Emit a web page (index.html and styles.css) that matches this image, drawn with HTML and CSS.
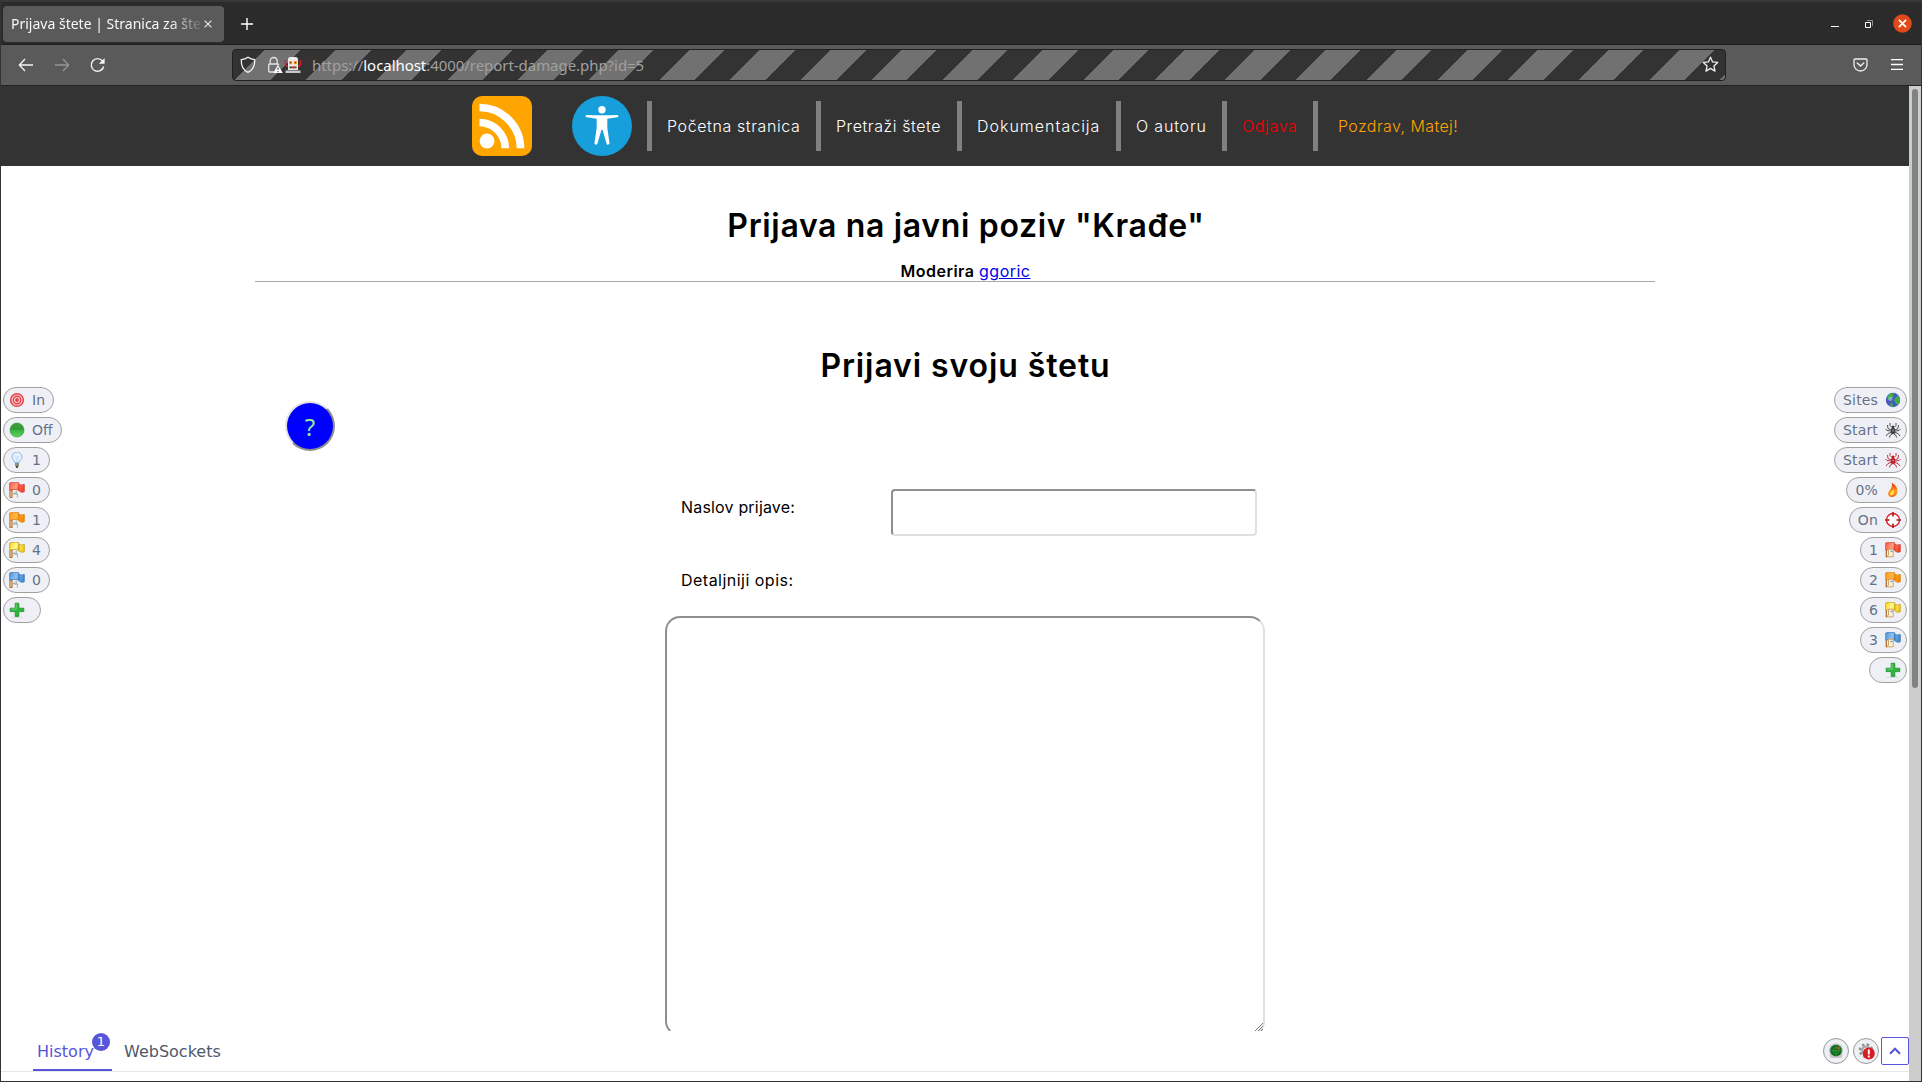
FILE: index.html
```html
<!DOCTYPE html>
<html lang="hr">
<head>
<meta charset="utf-8">
<title>Prijava štete | Stranica za štete</title>
<link rel="stylesheet" href="styles.css">
</head>
<body>
<svg class="defs" width="0" height="0">
  <defs>
    <linearGradient id="g-red" x2="1" y2=".3"><stop offset="0" stop-color="#ff5a48"/><stop offset=".5" stop-color="#ff9a80"/><stop offset="1" stop-color="#f4452f"/></linearGradient>
    <linearGradient id="g-orange" x2="1" y2=".3"><stop offset="0" stop-color="#ff9a10"/><stop offset=".5" stop-color="#ffb347"/><stop offset="1" stop-color="#f98a00"/></linearGradient>
    <linearGradient id="g-yellow" x2="1" y2=".3"><stop offset="0" stop-color="#ffd800"/><stop offset=".5" stop-color="#fff59a"/><stop offset="1" stop-color="#f5cf20"/></linearGradient>
    <linearGradient id="g-blue" x2="1" y2=".3"><stop offset="0" stop-color="#4c93dc"/><stop offset=".5" stop-color="#8cc0f2"/><stop offset="1" stop-color="#4a8ed6"/></linearGradient>
    <linearGradient id="g-ball" x2="0" y2="1"><stop offset="0" stop-color="#3da53f"/><stop offset=".5" stop-color="#2f9a34"/><stop offset=".5" stop-color="#38b440"/><stop offset="1" stop-color="#5fd45c"/></linearGradient>
    <linearGradient id="g-fire" x2="0" y2="1"><stop offset="0" stop-color="#e5340c"/><stop offset=".6" stop-color="#ff9d1c"/><stop offset="1" stop-color="#f26a10"/></linearGradient>
    <symbol id="wave" viewBox="0 0 16 16"><path d="M.7 1C4-.1 7 0 9.800.8v7.400C7 7.200 4 7.400.7 8.200zM9.800 2.300c1.700.9 3.600.7 5.500.2v7.200c-2 .9-3.900.7-5.500-1.100z" stroke-width=".8"/></symbol>
    <symbol id="pole" viewBox="0 0 16 16"><path d="M.9 8.300h2.200v7.200H.9z" fill="#f0cc9c" stroke="#a4622a" stroke-width=".9"/><path d="M4.500 11.500l3.200-2.300v3zM4.500 12h3.800v3.600" fill="#fff" stroke="#7d9a90" stroke-width=".7"/></symbol>
    <symbol id="page" viewBox="0 0 16 16"><path d="M3.500 7.200H8.200v7.600H1.500l2-1.500z" fill="#fff3dc" stroke="#d09a58" stroke-width=".9"/><path d="M5.500 9.500h2" stroke="#3aa0e8" stroke-width="1.300"/><path d="M1.300 8.300v7" stroke="#a4622a" stroke-width="1.200"/></symbol>
    <symbol id="plus" viewBox="0 0 16 16"><path d="M2 15.300h11" stroke="#d5d7da"/><path d="M6.200 1.200h3.600v5h5v3.400h-5v4.800H6.200V9.600h-5V6.200h5z" fill="#2fb43c" stroke="#169428" stroke-width=".8"/><path d="M7.200 2.200v5H2.300" fill="none" stroke="#7be27f" stroke-width=".8"/></symbol>
    <symbol id="spider" viewBox="0 0 16 16"><g fill="none" stroke="currentColor" stroke-width=".9"><path d="M6 8L3 6.500 2.500 3M5.800 9L2 8.500.5 7M6 10.500l-3 1L1 14M7 12l-2 1.500L4.500 15.500M10 8l3-1.500.5-3.500M10.200 9l3.800-.5L15.500 7M10 10.500l3 1 2 2.500M9 12l2 1.500.5 2M6.500 5L5 3.500V1M9.500 5L11 3.500V1"/></g><ellipse cx="8" cy="9" rx="2.300" ry="3.200" fill="currentColor"/><circle cx="8" cy="4.900" r="1.500" fill="currentColor"/><circle cx="8" cy="8.500" r="1" fill="#fff" opacity=".4"/></symbol>
  </defs>
</svg>

<div class="window">
  <header class="tabs">
    <div class="tab"><span class="tab-title">Prijava štete | Stranica za štete</span>
      <svg width="8" height="8" viewBox="0 0 8 8"><path d="M.6.6l6.800 6.800M7.400.6L.6 7.400" stroke="#eee" stroke-width="1.100"/></svg></div>
    <svg class="new-tab" width="12" height="12" viewBox="0 0 12 12"><path d="M6 0v12M0 6h12" stroke="#fff" stroke-width="1.400"/></svg>
    <div class="controls">
      <svg width="8" height="9" viewBox="0 0 8 9"><path d="M0 7.500h8" stroke="#fff"/></svg>
      <svg width="8" height="8" viewBox="0 0 8 8"><path d="M2 .5h5.500V6" fill="none" stroke="#8b8f8c"/><path d="M.5 2.500h5v5h-5z" fill="none" stroke="#fff"/></svg>
      <svg width="19" height="19" viewBox="0 0 19 19"><circle cx="9.500" cy="9.500" r="9.300" fill="#e0491a"/><path d="M5.900 5.900l7.200 7.200M13.100 5.900l-7.200 7.200" stroke="#fff" stroke-width="1.700"/></svg>
    </div>
  </header>

  <div class="toolbar">
    <svg class="back" width="16" height="14" viewBox="0 0 16 14"><path d="M7 1L1.300 7 7 13M1.300 7H15" fill="none" stroke="#f4f4f4" stroke-width="1.300"/></svg>
    <svg class="forward" width="16" height="14" viewBox="0 0 16 14"><path d="M9 1l5.700 6L9 13M14.700 7H1" fill="none" stroke="#959595" stroke-width="1.300"/></svg>
    <svg class="reload" width="16" height="16" viewBox="0 0 16 16"><path d="M13.700 9.500A6.300 6.300 0 1 1 12.500 4" fill="none" stroke="#f4f4f4" stroke-width="1.400"/><path d="M14.600 1v5.800H8.900z" fill="#f4f4f4"/></svg>
    <div class="address">
      <svg width="16" height="18" viewBox="0 0 16 18"><path d="M8 1.300c2 1.400 4 2.200 6.700 2.300.3 6-1.800 10.500-6.700 12.800C3.100 14.100 1 9.600 1.300 3.600 4 3.500 6 2.700 8 1.300z" fill="none" stroke="#f4f4f4" stroke-width="1.300"/></svg>
      <svg class="lock" width="16" height="18" viewBox="0 0 16 18"><path d="M3.200 8V5a3.500 3.500 0 0 1 7 0v3M7 16H2.700a1 1 0 0 1-1-1V9a1 1 0 0 1 1-1h8a1 1 0 0 1 1 1" fill="none" stroke="#e4e4e4" stroke-width="1.300"/><path d="M11 8.800l4.800 8.200H6.200z" fill="#fff"/><path d="M11 11.500v2.600M11 15v1.200" stroke="#555" stroke-width="1.200"/></svg>
      <svg class="robot" width="18" height="17" viewBox="0 0 18 17"><path d="M1.500 4v5l2.500 1.500M16.500 4v5L14 10.500" fill="none" stroke="#d11c35" stroke-width="1.500"/><path d="M4 3.500Q4 1 6.500 1h5Q14 1 14 3.500V14H4z" fill="#eceaea"/><path d="M1.500 14.500h15V17h-15z" fill="#c9c7c7"/><path d="M5 5h3.200v3.200H5zM9.800 5H13v3.200H9.800z" fill="#f0a23c"/><path d="M6 6h1.200v1.200H6zM10.800 6H12v1.200h-1.200z" fill="#7b1d10"/><path d="M5.500 10.500h7v1.800h-7z" fill="#3b3434"/><path d="M7.500 10.500h1.300v1.800H7.500zM10 10.500h1.300v1.800H10z" fill="#e0662b"/></svg>
      <span class="url">https://<b>localhost</b>:4000/report-damage.php?id=5</span>
      <svg class="star" width="17" height="17" viewBox="0 0 17 17"><path d="M8.500 1.200l2.100 4.700 5.100.5-3.800 3.500 1.100 5.200-4.500-2.700L4 15.100l1.100-5.200L1.300 6.400l5.100-.5z" fill="none" stroke="#f0f0f0" stroke-width="1.300" stroke-linejoin="round"/></svg>
    </div>
    <svg class="pocket" width="15" height="14" viewBox="0 0 15 14"><path d="M2 1h11a1 1 0 0 1 1 1v4.500a6.500 6.500 0 0 1-13 0V2a1 1 0 0 1 1-1z" fill="none" stroke="#f0f0f0" stroke-width="1.300"/><path d="M4.200 5l3.300 3.100L10.800 5" fill="none" stroke="#f0f0f0" stroke-width="1.400" stroke-linecap="round"/></svg>
    <svg class="menu" width="12" height="11" viewBox="0 0 12 11"><path d="M0 .7h12M0 5.500h12M0 10.300h12" stroke="#fff" stroke-width="1.300"/></svg>
  </div>

  <div class="viewport">
    <main class="page">
      <nav class="site-nav">
        <svg width="60" height="60" viewBox="0 0 60 60"><rect width="60" height="60" rx="10" fill="#ffa500"/><circle cx="15" cy="45" r="7.400" fill="#fff"/><path d="M7.500 26.500A26 26 0 0 1 33.300 52.300M7.500 11.500A41 41 0 0 1 48.500 52.300" fill="none" stroke="#fff" stroke-width="7.700"/></svg>
        <svg class="access" width="60" height="60" viewBox="0 0 60 60"><circle cx="30" cy="30" r="30" fill="#169fdb"/><circle cx="30" cy="13.700" r="3.700" fill="#fff"/><path d="M15 18.900q15 .8 30 0a1.200 1.200 0 0 1 .3 2.400l-10 1.400V32l2.200 14.800a1.500 1.500 0 0 1-3 .6L30.600 34h-1.200l-3.900 13.400a1.500 1.500 0 0 1-3-.6L24.700 32v-9.300l-10-1.400a1.200 1.200 0 0 1 .3-2.400z" fill="#fff"/></svg>
        <ul>
          <li class="n1">Početna stranica</li><li class="n2">Pretraži štete</li><li class="n3">Dokumentacija</li><li class="n4">O autoru</li><li class="n5">Odjava</li><li class="n6">Pozdrav, Matej!</li>
        </ul>
      </nav>
      <section class="intro">
        <h1>Prijava na javni poziv "Krađe"</h1>
        <p><strong>Moderira</strong> <a href="#">ggoric</a></p>
      </section>
      <section class="report">
        <h2>Prijavi svoju štetu</h2>
        <button class="help" type="button">?</button>
        <form>
          <div class="field"><label class="l1" for="title">Naslov prijave:</label><input id="title" type="text"></div>
          <label class="l2" for="details">Detaljniji opis:</label>
          <div class="area"><textarea id="details"></textarea>
            <svg width="8" height="8" viewBox="0 0 8 8"><path d="M0 8l8-8M3 8l5-5M6 8l2-2" stroke="#777" stroke-width="1"/></svg></div>
        </form>
      </section>
      <footer class="hud-bottom">
        <div class="hud-tab active">History<span class="count">1</span></div>
        <div class="hud-tab ws">WebSockets</div>
        <div class="hud-tools">
          <span class="round"><svg width="16" height="16" viewBox="0 0 16 16"><rect x="1.500" y="10" width="13" height="5" rx="2" fill="#c9c9c9"/><circle cx="8" cy="7.500" r="6.900" fill="#b9bdb9"/><circle cx="8" cy="7.500" r="5.800" fill="#116b1c"/><path d="M8 2v11M2.500 7.500h11" stroke="#3f9a42" stroke-width=".6"/><circle cx="8" cy="7.500" r="3" fill="none" stroke="#3f9a42" stroke-width=".6"/><circle cx="11" cy="5" r="1.100" fill="#ff4330"/></svg></span>
          <span class="round"><svg width="17" height="17" viewBox="0 0 17 17"><circle cx="8" cy="7.500" r="6" fill="none" stroke="#8f8f8f" stroke-width="2.600" stroke-dasharray="2.360 2.352"/><circle cx="8" cy="7.500" r="4" fill="none" stroke="#aaa" stroke-width="2.500"/><circle cx="10.800" cy="10.500" r="6" fill="#d61c24"/><path d="M10.800 6.500v5M10.800 12.600v1.800" stroke="#fff" stroke-width="1.900"/></svg></span>
          <span class="toggle"><svg width="12" height="8" viewBox="0 0 12 8"><path d="M1 6.700L6 1.700l5 5" fill="none" stroke="#5553d8" stroke-width="2"/></svg></span>
        </div>
      </footer>
      <aside class="hud left">
        <div class="pill"><svg viewBox="0 0 16 16"><circle cx="8" cy="8" r="7.100" fill="#e8414a"/><circle cx="8" cy="8" r="5" fill="none" stroke="#fbd5d6" stroke-width="1.100"/><circle cx="8" cy="8" r="2.500" fill="none" stroke="#fbd5d6" stroke-width="1.100"/></svg>In</div>
        <div class="pill"><svg viewBox="0 0 16 16"><circle cx="8" cy="8" r="7" fill="url(#g-ball)" stroke="#2d9134" stroke-width=".6"/></svg>Off</div>
        <div class="pill"><svg viewBox="0 0 16 16"><path d="M5.800 10.500C5.500 8 3 7.500 3 5a5 5 0 0 1 10 0c0 2.500-2.500 3-2.800 5.500z" fill="#e3f1ff" stroke="#8bb8ee"/><path d="M6 4.500l1.500 1 1-1 1.500 1M8 6v4.500" fill="none" stroke="#a5c8f0" stroke-width=".7"/><path d="M6 11h4v3.500H6z" fill="#8c8f80"/><path d="M7 15h2" stroke="#222" stroke-width="1.500"/></svg>1</div>
        <div class="pill"><svg viewBox="0 0 16 16"><use href="#pole"/><use href="#wave" fill="url(#g-red)" stroke="#d8402c"/></svg>0</div>
        <div class="pill"><svg viewBox="0 0 16 16"><use href="#pole"/><use href="#wave" fill="url(#g-orange)" stroke="#d9800c"/></svg>1</div>
        <div class="pill"><svg viewBox="0 0 16 16"><use href="#pole"/><use href="#wave" fill="url(#g-yellow)" stroke="#c79c10"/></svg>4</div>
        <div class="pill"><svg viewBox="0 0 16 16"><use href="#pole"/><use href="#wave" fill="url(#g-blue)" stroke="#3b78b8"/></svg>0</div>
        <div class="pill empty"><svg viewBox="0 0 16 16"><use href="#plus"/></svg></div>
      </aside>
      <aside class="hud right">
        <div class="pill wide">Sites<svg viewBox="0 0 16 16"><circle cx="8" cy="8" r="7.200" fill="#4a55c4"/><path d="M2 4.500C4 1.500 7 .6 9.500 1L8 3l1 1.500-3 1.800L5.500 9 3 7.500zM10 6l3-2.500 2 3-.2 4L12 13l-1.500-2L9 8.500zM5 10.500l2.500 1L8 15H6z" fill="#3fae49"/><circle cx="5.500" cy="6.800" r="2.200" fill="#b8c4f8" opacity=".55"/></svg></div>
        <div class="pill wide">Start<svg class="dark" viewBox="0 0 16 16"><use href="#spider"/></svg></div>
        <div class="pill wide">Start<svg class="red" viewBox="0 0 16 16"><use href="#spider"/></svg></div>
        <div class="pill wide">0%<svg viewBox="0 0 16 16"><path d="M6.500.8c5 2.500 6.700 6 5.700 10-.8 3.500-3.700 4.700-6 4.200-3.200-.8-4-4.200-1.600-6.800 1.600-1.700 3.200-3.700 1.900-7.400z" fill="url(#g-fire)"/><path d="M8.500 7.500c1.300 3.500-.3 6-2.300 5.800-2-.3-1.500-2.300.2-3.300z" fill="#ffe352"/></svg></div>
        <div class="pill wide">On<svg viewBox="0 0 16 16"><circle cx="8" cy="8" r="6.500" fill="#fff" stroke="#d5222c" stroke-width="1.400"/><path d="M8 0v4.500M8 11.500V16M0 8h4.500M11.500 8H16" stroke="#a81820" stroke-width="1.600"/></svg></div>
        <div class="pill">1<svg viewBox="0 0 16 16"><use href="#wave" fill="url(#g-red)" stroke="#d8402c"/><use href="#page"/></svg></div>
        <div class="pill">2<svg viewBox="0 0 16 16"><use href="#wave" fill="url(#g-orange)" stroke="#d9800c"/><use href="#page"/></svg></div>
        <div class="pill">6<svg viewBox="0 0 16 16"><use href="#wave" fill="url(#g-yellow)" stroke="#c79c10"/><use href="#page"/></svg></div>
        <div class="pill">3<svg viewBox="0 0 16 16"><use href="#wave" fill="url(#g-blue)" stroke="#3b78b8"/><use href="#page"/></svg></div>
        <div class="pill empty"><svg viewBox="0 0 16 16"><use href="#plus"/></svg></div>
      </aside>
    </main>
    <div class="scrollbar"><div class="thumb"></div></div>
  </div>
</div>
</body>
</html>
```
FILE: styles.css
```css
* { box-sizing: border-box; }
html, body { margin: 0; height: 100%; overflow: hidden; }
svg { display: block; flex: none; }
.defs { position: absolute; }

.window {
  display: flex; flex-direction: column;
  width: 1922px; height: 1082px;
  border: 1px solid #333; border-top: 2px solid #383838;
  background: #fff;
}

/* Tab strip */
.tabs {
  display: flex; align-items: center; flex: none;
  height: 43px; padding: 1px 9px 0 2px;
  background: #2b2b2b; border-bottom: 1px solid #1e1e1e;
  font-family: "Noto Sans", sans-serif;
}
.tab {
  display: flex; align-items: center;
  width: 221px; height: 36px; padding-left: 8px;
  border-radius: 4px; background: #5a5a5a; color: #f7f7f7;
  font-size: 14px;
}
.tab-title {
  width: 190px; margin-right: 3px; overflow: hidden; white-space: nowrap;
  -webkit-mask-image: linear-gradient(to right, #000 158px, transparent 194px);
  mask-image: linear-gradient(to right, #000 158px, transparent 194px);
}
.new-tab { margin-left: 17px; }
.controls { display: flex; align-items: center; gap: 20px; margin-left: auto; }
.controls svg:nth-child(2) { margin-left: 6px; }

/* Toolbar */
.toolbar {
  display: flex; align-items: center; flex: none;
  height: 41px; padding: 0 18px 1px 16px;
  background: #5a5a5a; border-bottom: 1px solid #222;
}
.back { margin-left: 1px; }
.forward { margin-left: 20px; }
.reload { margin-left: 20px; }
.address {
  display: flex; align-items: center;
  width: 1494px; height: 32px; margin-left: 126px; padding-left: 7px;
  border: 1px solid #202020; border-radius: 4px;
  background: repeating-linear-gradient(135deg, #333 0 22.600px, #717171 22.600px 47.600px, #333 47.600px 50px);
}
.lock { margin-left: 11px; }
.robot { margin-left: 1px; }
.url {
  margin-left: 10px;
  font: 15px "Noto Sans", sans-serif; letter-spacing: -.05px; color: #a0a0a0;
}
.url b { font-weight: 400; color: #fff; }
.star { margin-left: auto; margin-right: 6px; }
.pocket { margin-left: 127px; }
.menu { margin-left: auto; }

/* Page viewport */
.viewport { display: flex; flex: 1; min-height: 0; }
.page {
  position: relative; display: flex; flex-direction: column;
  flex: 1; min-width: 0;
  font: 16px/20px Inter, sans-serif; color: #000;
}
.scrollbar { width: 12px; padding: 3px 3px 0; background: #cdcdcd; }
.thumb { width: 6px; height: 599px; border-radius: 3px; background: #7f8382; }

.site-nav {
  display: flex; align-items: center; flex: none;
  height: 80px; padding-left: 471px; background: #333; color: #fff;
  font-weight: 300;
}
.access { margin-left: 40px; }
.site-nav ul { display: flex; margin: 0 0 0 15px; padding: 0; list-style: none; }
.site-nav li {
  height: 50px; padding-left: 15px; border-left: 5px solid #808080;
  line-height: 51px; white-space: nowrap;
}
.n1 { width: 169px; letter-spacing: .6px; }
.n2 { width: 141px; letter-spacing: .57px; }
.n3 { width: 159px; letter-spacing: 1px; }
.n4 { width: 106px; letter-spacing: .82px; }
.n5 { width: 91px; letter-spacing: .65px; color: #f00000; }
.site-nav .n6 { padding-left: 20px; letter-spacing: .4px; color: #ffa500; }

.intro {
  flex: none; width: 1400px; height: 116px; margin-left: 254px; padding: 40px 0 0 22px;
  border-bottom: 1px solid #a9a9a9; text-align: center;
}
h1, h2 { margin: 0; font-size: 32px; line-height: 40px; font-weight: 600; }
h1 { letter-spacing: .66px; }
h2 { padding-left: 21px; letter-spacing: .9px; text-align: center; }
.intro p { margin: 15px 0 0; padding-right: 1px; }
.intro strong { font-weight: 600; letter-spacing: .5px; }
.intro a { color: #0000ee; letter-spacing: .5px; }

.report {
  flex: 1; min-height: 0; overflow: hidden;
  padding-top: 64px;
}
.report h2 { width: 1400px; margin-left: 254px; }
.help {
  display: block; width: 50px; height: 50px; margin: 15px 0 0 284px; padding: 0;
  border: 2px outset #e3e3e3; border-radius: 50%;
  background: #0000ff; color: #90ee90;
  font: 24px "Noto Sans", sans-serif;
}
form { width: 601px; margin: 38px 0 0 664px; }
.field { display: flex; height: 81px; padding-left: 16px; }
.l1 { width: 210px; padding-top: 8px; letter-spacing: .18px; }
.l2 { display: block; padding-left: 16px; letter-spacing: .48px; }
.field input {
  width: 366px; height: 47px; border: 2px solid; border-radius: 4px;
  border-color: #8f8f8f #e0e0e0 #e0e0e0 #8f8f8f;
}
.area { position: relative; height: 415px; margin-top: 26px; overflow: hidden; }
.area textarea {
  display: block; width: 600px; height: 420px; border: 2px solid; border-radius: 15px;
  border-color: #8f8f8f #e0e0e0 #e0e0e0 #8f8f8f; resize: none;
}
.area svg { position: absolute; right: 3px; bottom: 0; }

/* HUD overlays */
.hud-bottom {
  display: flex; flex: none; height: 41px; margin-bottom: 9px; padding: 0 0 0 32px;
  border-bottom: 1px solid #e6e6e6; background: #fff;
  font-family: "DejaVu Sans", sans-serif; color: #50596c;
}
.hud-tab { height: 40px; padding-top: 11px; }
.active {
  position: relative; width: 79px; padding-left: 4px;
  border-bottom: 2px solid #5755d9; color: #5755d9;
}
.count {
  position: absolute; left: 59px; top: 2px; width: 18px; height: 18px;
  border-radius: 50%; background: #5755d9; color: #fff;
  font-size: 13px; line-height: 18px; text-align: center;
}
.ws { margin-left: 12px; }
.hud-tools { display: flex; align-items: center; gap: 4px; height: 28px; margin: 6px 0 0 auto; }
.round {
  display: grid; place-items: center; width: 26px; height: 26px;
  border: 1px solid #999; border-radius: 50%; background: #eef0f5;
}
.toggle { display: grid; place-items: center; width: 28px; height: 28px; margin-left: -2px; border: 1px solid #5755d9; border-radius: 2px; }

.hud {
  position: absolute; top: 301px; display: flex; flex-direction: column; gap: 4px;
  font: 14px/24px "DejaVu Sans", sans-serif; color: #667189;
}
.left { left: 2px; align-items: flex-start; }
.right { right: 2px; align-items: flex-end; }
.pill {
  display: flex; align-items: center; gap: 7px; height: 26px; padding: 0 8px 0 5px;
  border: 1px solid #a0a0a0; border-radius: 13px; background: #eef0f5;
}
.pill svg { width: 16px; height: 16px; }
.right .pill { padding: 0 5px 0 8px; }
.right .wide { letter-spacing: .15px; }
.left .empty { width: 38px; }
.right .empty { width: 38px; justify-content: flex-end; }
.dark { color: #3a3d42; }
.red { color: #b81f2b; }
```
